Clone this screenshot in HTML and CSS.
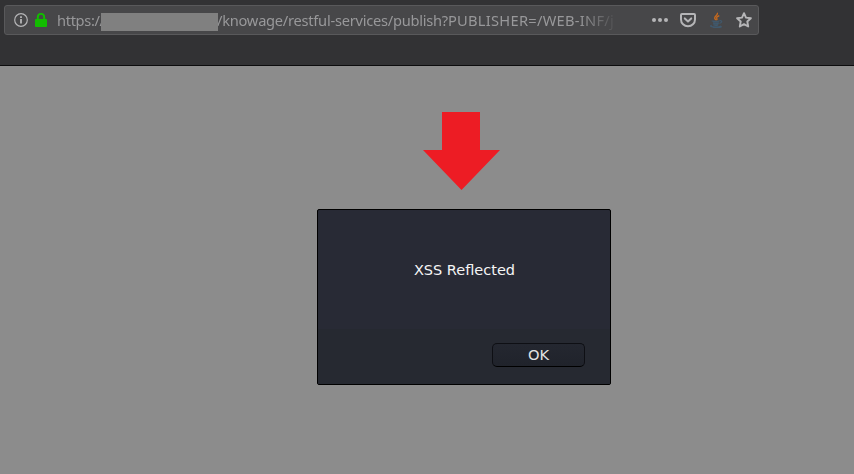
FILE: index.html
```
<!DOCTYPE html>
<html lang="en">
<head>
<meta charset="utf-8">
<title>Knowage</title>
<link rel="stylesheet" href="styles.css">
</head>
<body>
<header class="toolbar">
  <div class="urlbar">
    <svg class="info" width="14" height="14" viewBox="0 0 14 14" fill="none" stroke="#b5b5b7"><circle cx="7" cy="7" r="6.3" stroke-width="1.2"/><path d="M7 6v4.6M7 3.2v1.8" stroke-width="1.8"/></svg>
    <svg class="lock" width="12" height="14" viewBox="0 0 12 14"><path d="M2.8 7V4a3.2 3.2 0 0 1 6.4 0v3" fill="none" stroke="#12bc00" stroke-width="2"/><rect y="6" width="12" height="8" rx="1" fill="#12bc00"/></svg>
    <div class="address"><span class="scheme">https://</span><span class="redacted"></span><span class="path">/knowage/restful-services/publish?<span class="query">PUBLISHER=/WEB-INF/j</span></span></div>
    <div class="actions">
      <svg width="16" height="16" viewBox="0 0 16 16" fill="#b5b5b7"><circle cx="2" cy="8" r="2"/><circle cx="8" cy="8" r="2"/><circle cx="14" cy="8" r="2"/></svg>
      <svg width="16" height="16" viewBox="0 0 16 16" fill="none" stroke="#b5b5b7" stroke-width="2" stroke-linecap="round" stroke-linejoin="round"><path d="M2 2h12q1 0 1 1v4.4a7 6.8 0 0 1-14 0V3q0-1 1-1z"/><path d="M4.8 6.4 8 9.4l3.2-3"/></svg>
      <svg width="16" height="16" viewBox="0 0 16 16" fill="none"><path d="M9.4.8c1 2.6-4.2 3.5-2.4 6.2l.8 1.1M11.3 3.6C8.8 4.6 8 5.6 8.9 6.6c.4.6.2 1.1-.5 1.7" stroke="#c8691c" stroke-width="1.3"/><path d="M4.4 8.7c-1.8.8 6.2.9 7.4-.1M5 11c1.5.8 4 .8 5.7.2M5.4 12.7c1.3.8 3.4.7 4.7.2M12 8.6c2.7-.2 2 2.2-.5 3M3.8 13.2c-5 1.6 6.2 2.5 9.4.8M4.8 15.6c3 .3 7.7.2 9-1" stroke="#40596d" stroke-width="1.1"/><path d="M4.8 9h6.3l-.7 4H5.6z" fill="#40596d" opacity=".65"/></svg>
      <svg width="16" height="16" viewBox="0 0 16 16" fill="none" stroke="#b5b5b7" stroke-width="1.9" stroke-linejoin="round"><path d="m8 1.2 2 4.4 4.9.6-3.6 3.3.9 5L8 12.1l-4.2 2.4.9-5L1.1 6.2 6 5.6z"/></svg>
    </div>
  </div>
</header>
<main class="page">
  <svg class="arrow" width="77" height="78" viewBox="0 0 77 78"><path d="M19 0h38v38h20L38.5 78 0 38h19z" fill="#ed1c24"/></svg>
  <section class="dialog" role="alertdialog">
    <p class="message">XSS Reflected</p>
    <footer class="buttons"><button class="ok">OK</button></footer>
  </section>
</main>
</body>
</html>
```
FILE: styles.css
```
* { box-sizing: border-box; }
body { margin: 0; height: 474px; overflow: hidden; display: flex; flex-direction: column; background: #8c8c8c; }
.toolbar { height: 66px; flex: none; padding: 5px 0 0 4px; background: #323234; border-bottom: 1px solid #0c0c0d; }
.urlbar { width: 755px; height: 30px; display: flex; align-items: center; padding: 0 6px 0 9px; background: #474749; border: 1px solid #59595b; border-radius: 3px; }
.lock { margin: 0 10px 0 7px; }
.info, .lock { flex: none; }
.address { width: 562px; height: 28px; display: flex; align-items: center; white-space: nowrap; font: 14.67px/28px "Noto Sans", sans-serif; letter-spacing: -0.26px; color: #98989a; -webkit-mask-image: linear-gradient(to right, #000 calc(100% - 40px), transparent); mask-image: linear-gradient(to right, #000 calc(100% - 40px), transparent); }
.query { letter-spacing: 0.27px; }
.scheme { width: 44px; flex: none; letter-spacing: -0.35px; }
.redacted { width: 117px; height: 18px; margin: 3px -1px 0 0; flex: none; background: #808080; position: relative; }
.actions { margin-left: auto; display: flex; gap: 12px; }
.page { flex: 1; display: flex; flex-direction: column; padding: 46px 0 0 317px; background: #8c8c8c; }
.arrow { margin-left: 106px; flex: none; }
.dialog { width: 294px; height: 176px; margin-top: 19px; flex: none; display: flex; flex-direction: column; background: #282a35; border: 1px solid #000; border-radius: 2px; overflow: hidden; font-family: "DejaVu Sans", sans-serif; }
.message { height: 119px; margin: 0; padding-left: 1px; text-align: center; font-size: 14.5px; line-height: 120px; color: #f5f5f5; }
.buttons { flex: 1; display: flex; justify-content: flex-end; align-items: flex-start; padding: 14px 25px 0 0; background: #262931; }
.ok { width: 93px; height: 24px; padding: 0; font: 14.67px/20px "DejaVu Sans", sans-serif; color: #e2e2e2; background: linear-gradient(#242730, #20232b); border: 1px solid #0e0f14; border-bottom-color: #000; border-radius: 5px; }
```
